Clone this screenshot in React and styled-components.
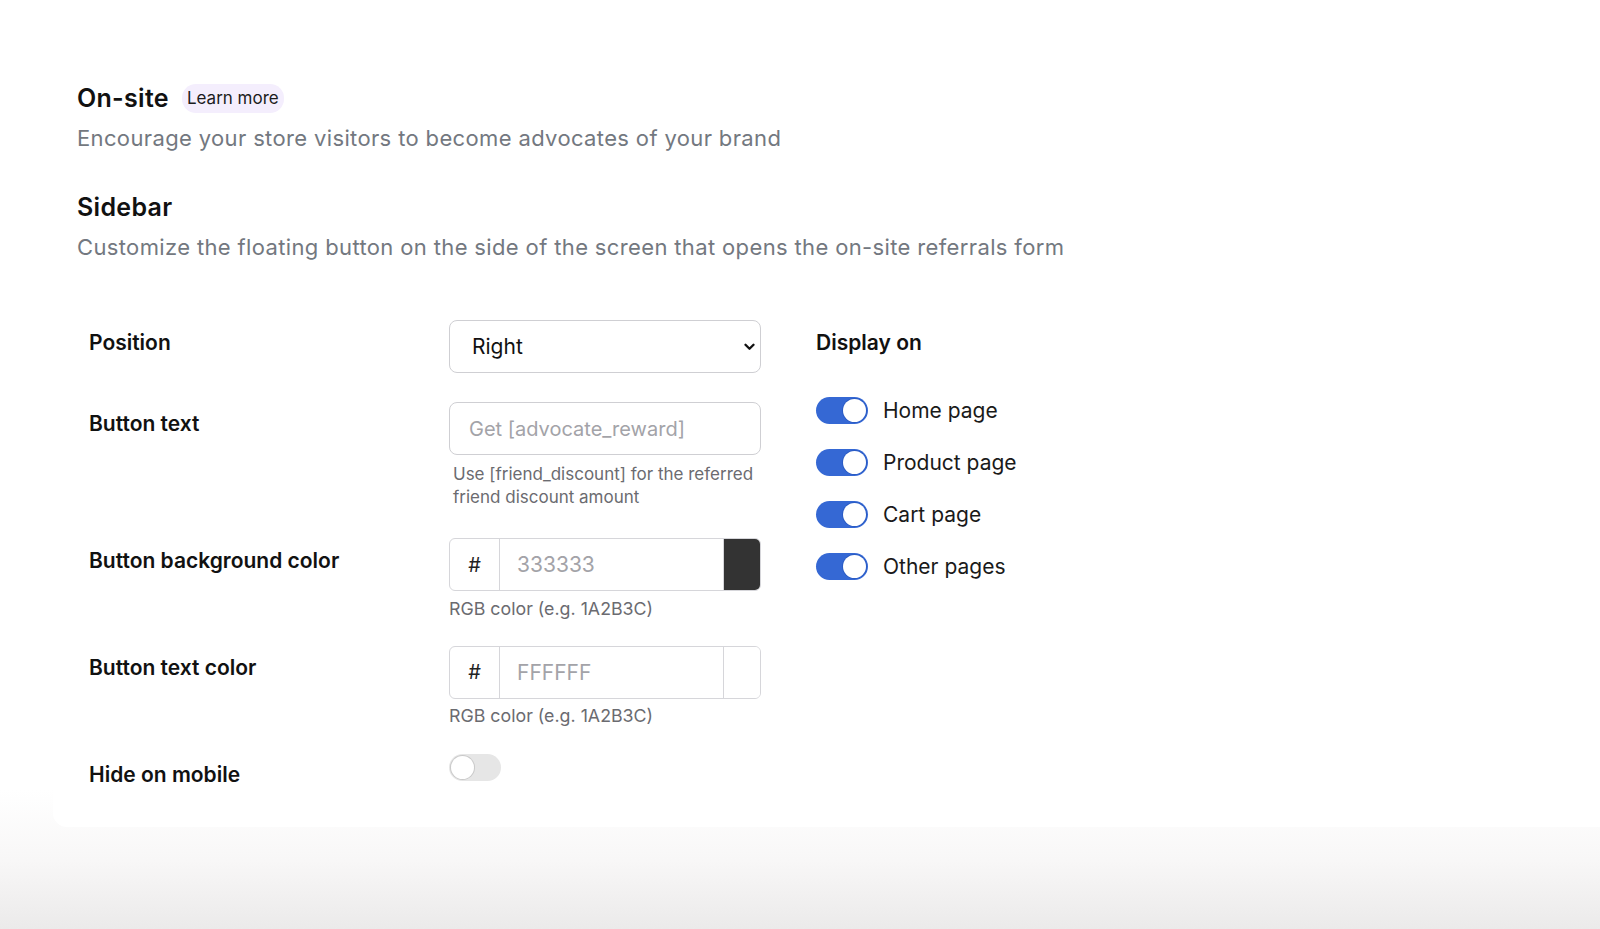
import { useState } from "react"
import styled, { createGlobalStyle } from "styled-components"

const Global = createGlobalStyle`
  html, body {
    margin: 0;
    padding: 0;
  }
  body {
    font-family: Inter, "Noto Sans", sans-serif;
    color: #111111;
    background: linear-gradient(to bottom, #ffffff 0px, #ffffff 790px, #f8f7f7 860px, #ebeaea 929px);
    min-height: 929px;
  }
`

const Page = styled.div`
  width: 1600px;
  height: 929px;
  overflow: hidden;
`

const Card = styled.div`
  margin-left: 53px;
  background: #ffffff;
  border-bottom-left-radius: 14px;
  padding: 81px 0 39px 24px;
`

const TitleRow = styled.div`
  display: flex;
  align-items: center;
  gap: 13px;
`

const Title = styled.h1`
  margin: ${p => p.$top || 0}px 0 0 0;
  font-size: 25px;
  line-height: 34px;
  font-weight: 600;
  color: #111111;
  letter-spacing: 0.3px;
`

const Pill = styled.a`
  display: inline-block;
  background: #f4eefd;
  color: #1c1c1c;
  font-size: 17px;
  line-height: 20px;
  padding: 4px 5px 5px;
  border-radius: 14px;
  text-decoration: none;
`

const Lead = styled.p`
  margin: 7px 0 0 0;
  font-size: 22px;
  line-height: 32px;
  color: #737880;
  letter-spacing: 0.36px;
`

const Form = styled.div`
  display: flex;
  margin-top: 57px;
  padding-left: 12px;
`

const Fields = styled.div`
  display: flex;
  flex-direction: column;
`

const Row = styled.div`
  display: grid;
  grid-template-columns: 360px 312px;
  align-items: start;
  margin-top: ${p => p.$gap || 0}px;
`

const Label = styled.div`
  font-size: 21px;
  line-height: 26px;
  font-weight: 600;
  padding-top: ${p => p.$top ?? 10}px;
  color: #111111;
`

const Control = styled.div`
  display: flex;
  flex-direction: column;
`

const SelectWrap = styled.div`
  position: relative;
  height: 53px;
`

const Select = styled.select`
  appearance: none;
  width: 100%;
  height: 53px;
  border: 1px solid #cfcfd3;
  border-radius: 8px;
  background: #ffffff;
  font-family: inherit;
  font-size: 21px;
  color: #111111;
  padding: 0 22px;
  outline: none;
`

const Chevron = styled.svg`
  position: absolute;
  right: 6px;
  top: 23px;
  pointer-events: none;
`

const TextInput = styled.input`
  box-sizing: border-box;
  width: 100%;
  height: 53px;
  border: 1px solid #cfcfd3;
  border-radius: 8px;
  padding: 0 19px;
  font-family: inherit;
  font-size: 20px;
  outline: none;
  &::placeholder {
    color: #a3a3a8;
  }
`

const Help = styled.div`
  margin-top: ${p => p.$top || 7}px;
  padding-left: ${p => p.$indent || 0}px;
  font-size: ${p => p.$size || 17}px;
  line-height: 22.5px;
  color: #6b6b70;
`

const ColorBox = styled.div`
  display: grid;
  grid-template-columns: 50px 1fr 37px;
  height: 53px;
  box-sizing: border-box;
  border: 1px solid #d6d6da;
  border-radius: 6px;
  overflow: hidden;
`

const Hash = styled.div`
  display: flex;
  align-items: center;
  justify-content: center;
  border-right: 1px solid #d6d6da;
  font-size: 20px;
  color: #222222;
`

const ColorInput = styled.input`
  border: none;
  outline: none;
  min-width: 0;
  padding: 0 17px;
  font-family: inherit;
  font-size: 21px;
  &::placeholder {
    color: #a3a3a8;
  }
`

const Swatch = styled.div`
  background: ${p => p.$color};
  border-left: 1px solid #d6d6da;
`

const Track = styled.button`
  position: relative;
  width: 52px;
  height: 27px;
  border: none;
  padding: 0;
  border-radius: 14px;
  cursor: pointer;
  background: ${p => (p.$on ? "#3568d4" : "#e6e6e6")};
  flex-shrink: 0;
  &::after {
    content: "";
    position: absolute;
    top: 2px;
    left: ${p => (p.$on ? "27px" : "2px")};
    width: 23px;
    height: 23px;
    border-radius: 50%;
    background: #ffffff;
    box-shadow: ${p => (p.$on ? "0 0 0 1px #2a5bc4" : "0 0 0 1px #c9c9c9")};
  }
`

const Display = styled.div`
  margin-left: 55px;
  display: flex;
  flex-direction: column;
`

const Toggles = styled.div`
  margin-top: 41px;
  display: flex;
  flex-direction: column;
  gap: 25px;
`

const ToggleRow = styled.label`
  display: flex;
  align-items: center;
  gap: 15px;
  font-size: 21px;
  line-height: 27px;
  color: #1a1a1a;
  cursor: pointer;
`

const Toggle = ({ on, onClick }) => <Track type="button" $on={on} onClick={onClick} />

export default function App() {
  const [pages, setPages] = useState({ home: true, product: true, cart: true, other: true })
  const [hideMobile, setHideMobile] = useState(false)

  const flip = key => setPages(p => ({ ...p, [key]: !p[key] }))

  const list = [
    ["home", "Home page"],
    ["product", "Product page"],
    ["cart", "Cart page"],
    ["other", "Other pages"],
  ]

  return (
    <Page>
      <Global />
      <Card>
        <TitleRow>
          <Title>On-site</Title>
          <Pill href="#">Learn more</Pill>
        </TitleRow>
        <Lead>Encourage your store visitors to become advocates of your brand</Lead>

        <Title $top={36}>Sidebar</Title>
        <Lead>Customize the floating button on the side of the screen that opens the on-site referrals form</Lead>

        <Form>
          <Fields>
            <Row>
              <Label>Position</Label>
              <SelectWrap>
                <Select defaultValue="Right">
                  <option>Right</option>
                  <option>Left</option>
                </Select>
                <Chevron width="11" height="8" viewBox="0 0 11 8">
                  <path d="M1.5 1.8 L5.5 5.8 L9.5 1.8" fill="none" stroke="#111" strokeWidth="2.3" strokeLinecap="round" strokeLinejoin="round" />
                </Chevron>
              </SelectWrap>
            </Row>

            <Row $gap={29}>
              <Label $top={9}>Button text</Label>
              <Control>
                <TextInput placeholder="Get [advocate_reward]" />
                <Help $top={8} $indent={4}>Use [friend_discount] for the referred friend discount amount</Help>
              </Control>
            </Row>

            <Row $gap={30}>
              <Label>Button background color</Label>
              <Control>
                <ColorBox>
                  <Hash>#</Hash>
                  <ColorInput placeholder="333333" />
                  <Swatch $color="#333333" />
                </ColorBox>
                <Help $size={17.8}>RGB color (e.g. 1A2B3C)</Help>
              </Control>
            </Row>

            <Row $gap={25}>
              <Label $top={9}>Button text color</Label>
              <Control>
                <ColorBox>
                  <Hash>#</Hash>
                  <ColorInput placeholder="FFFFFF" />
                  <Swatch $color="#ffffff" />
                </ColorBox>
                <Help $top={6} $size={17.8}>RGB color (e.g. 1A2B3C)</Help>
              </Control>
            </Row>

            <Row $gap={27}>
              <Label $top={8}>Hide on mobile</Label>
              <Control>
                <Toggle on={hideMobile} onClick={() => setHideMobile(v => !v)} />
              </Control>
            </Row>
          </Fields>

          <Display>
            <Label>Display on</Label>
            <Toggles>
              {list.map(([key, text]) => (
                <ToggleRow key={key}>
                  <Toggle on={pages[key]} onClick={() => flip(key)} />
                  {text}
                </ToggleRow>
              ))}
            </Toggles>
          </Display>
        </Form>
      </Card>
    </Page>
  )
}
